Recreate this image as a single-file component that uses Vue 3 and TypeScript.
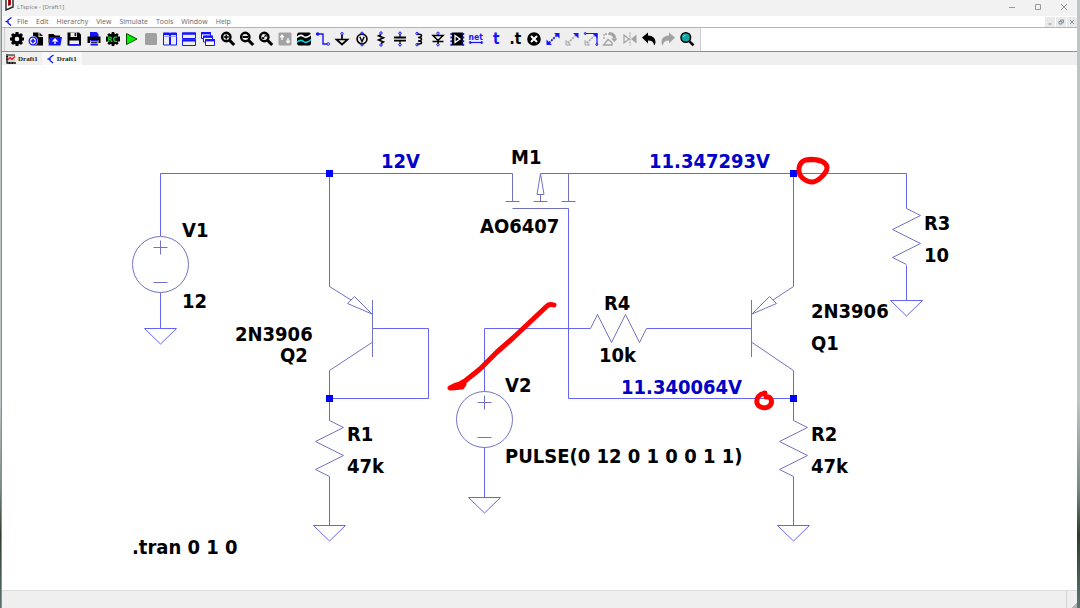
<script setup lang="ts">
interface Shape {
  d?: string
  text?: string
  x?: number
  y?: number
  size?: number
  fill?: string
  stroke?: string
  width?: number
  dash?: string
}
interface Tool {
  label: string
  shapes: Shape[]
}

const K = '#000'
const B = '#1414ff'
const G = '#a2a2a2'

const fill = (d: string, color = K): Shape => ({ d, fill: color })
const line = (d: string, color = K, width = 1.5, dash = 'none'): Shape => ({ d, stroke: color, width, dash })
const circle = (x: number, y: number, r: number) =>
  `M${x - r} ${y}a${r} ${r} 0 1 0 ${2 * r} 0a${r} ${r} 0 1 0 ${-2 * r} 0z`

const lens = [line(circle(6.3, 6, 4.2), K, 2.4), line('M9.6 9.4L14.2 14', K, 3)]

const tools: Tool[] = [
  {
    label: 'Settings',
    shapes: [
      line(circle(8, 8, 4), K, 3.4),
      line('M8 1v3M8 12v3M1 8h3M12 8h3M3 3l2 2M11 11l2 2M13 3l-2 2M5 11l-2 2', K, 3),
    ],
  },
  {
    label: 'New schematic',
    shapes: [
      fill('M5 1.500h5.500v4.500h4.500v8.500H5z'),
      fill('M11.500 1.500l3.500 3.500h-3.500z'),
      fill(circle(5, 10, 5), '#efefef'),
      line(circle(5, 10, 3.800), B, 1.3),
      line('M5 7.800v4.400M2.800 10h4.400', B, 1.6),
    ],
  },
  {
    label: 'Open',
    shapes: [
      fill('M1.500 3h5l1.500 1.500h5V7H3l-1.500 6z'),
      fill('M3 6h12l-1.500 8.500h-12z', B),
      line('M8 13V9M5.600 10.600L8 8l2.400 2.600', '#fff', 1.4),
    ],
  },
  {
    label: 'Save',
    shapes: [
      fill('M1.500 1.500h11.500l2 2v11H1.500z'),
      fill('M4.500 1.500h6.500v4.500H4.500z', '#efefef'),
      fill('M8.600 2h1.600v3.200H8.600z'),
      fill('M3.500 9.500h9.500v4H3.500z', '#efefef'),
      fill('M3 13h10.500v1.600H3z', B),
    ],
  },
  {
    label: 'Print',
    shapes: [
      fill('M4 1h6.500l2 2v3H4z', B),
      fill('M1.500 5.500h13v6.500h-13z'),
      fill('M4 9h8.500v5.500H4z', '#efefef'),
      line('M4.500 9.800h7.500M4.500 13.800h7.500', B, 1.5),
      line('M5 11.800h6.500', K, 1.2),
    ],
  },
  {
    label: 'Configure analysis',
    shapes: [
      line(circle(8, 8, 4), K, 3.4),
      line('M8 1v3M8 12v3M3.200 2.800l2 2M10.800 11.200l2 2M12.800 2.800l-2 2M5.200 11.200l-2 2', K, 2.6),
      fill('M1 5.500h14v5H1z'),
      { text: 'RC', x: 2.5, y: 10.600, size: 7.500, fill: '#00d820' },
    ],
  },
  { label: 'Run', shapes: [{ d: 'M2.500 2.500L13 8L2.500 13.500z', fill: '#00f000', stroke: '#064a06', width: 1 }] },
  { label: 'Stop', shapes: [fill('M3.500 2h9q1.500 0 1.500 1.500v9q0 1.500-1.500 1.500h-9q-1.500 0-1.500-1.500v-9q0-1.500 1.500-1.500z', '#a0a0a0')] },
  {
    label: 'Tile vertically',
    shapes: [line('M1.500 2h6v12h-6zM8.500 2h6v12h-6z', B, 1), line('M1 3h13.500', B, 2.2), line('M1.500 5.500h13', '#8d8dff', 0.8)],
  },
  {
    label: 'Tile horizontally',
    shapes: [line('M1.500 2h13v5.500h-13zM1.500 9h13v5.500h-13z', B, 1), line('M1 2.600h14M1 9.400h14', B, 2.2)],
  },
  {
    label: 'Cascade',
    shapes: [
      { d: 'M1.500 1.500h9v6h-9z', fill: '#fff', stroke: B, width: 1 },
      line('M1 2.300h10', B, 2.2),
      { d: 'M3.500 5h9v6h-9z', fill: '#fff', stroke: B, width: 1 },
      line('M3 5.800h10', B, 2.2),
      { d: 'M5.500 8.500h9v6h-9z', fill: '#fff', stroke: B, width: 1 },
      line('M5 9.300h10', B, 2.2),
    ],
  },
  { label: 'Zoom in', shapes: [...lens, line('M3.800 6h5M6.300 3.500v5', K, 1.6)] },
  { label: 'Zoom out', shapes: [...lens, line('M3.600 6h5.400', K, 2)] },
  { label: 'Zoom to fit', shapes: [...lens, line('M4.600 7.600L8 4.400', K, 1), fill('M6 3.800h2.500v2.500zM4.200 5.600v2.500h2.500z')] },
  {
    label: 'Autorange',
    shapes: [
      fill('M2.500 1.500h11l1 1v11l-1 1h-11l-1-1v-11z', G),
      line('M5 9V4.500M3.200 6.300L5 4.300l1.800 2M11 7v4.500M9.200 9.700l1.800 2l1.800-2', '#fff', 1.3),
    ],
  },
  {
    label: 'Waveforms',
    shapes: [
      fill('M2.500 1.500h11l1.500 1.500v10l-1.500 1.500h-11L1 13V3z'),
      line('M1 6.500q3.500-3.500 6.500-1t7.500-2', '#fff', 1.6),
      line('M1 11.500q3.500-3.500 6.500-1t7.500-2', '#00d6e0', 1.6),
    ],
  },
  { label: 'Wire', shapes: [line('M3 3h5v10h5', B, 1.4), fill(circle(2.700, 3, 1.8), B), { d: circle(13.200, 13, 1.300), fill: '#fff', stroke: B, width: 1 }] },
  { label: 'Ground', shapes: [line('M8 4v4M2.500 8.500h11L8 13.500z', K, 1.700), line(circle(8, 2.700, 1.200), B, 1)] },
  { label: 'Voltage source', shapes: [line(circle(8, 8, 4.900), K, 1.700), line('M5.800 5.800L8 10.500l2.200-4.700', K, 1.4), line(circle(8, 2.300, 1.200), B, 1), line(circle(8, 13.700, 1.200), B, 1)] },
  { label: 'Resistor', shapes: [line('M8 3.500l-2.500 1.300l5 2l-5 2.200l5 2L8 12.500', K, 1.5), line(circle(8, 2, 1.200), B, 1), line(circle(8, 14, 1.200), B, 1)] },
  { label: 'Capacitor', shapes: [line('M2 6.500h12M2 9.700h12', K, 1.8), line('M8 3v3M8 10v3', K, 1.2), line(circle(8, 2.200, 1.200), B, 1), line(circle(8, 13.800, 1.200), B, 1)] },
  { label: 'Inductor', shapes: [line('M6 3.200h2q2.500 0 2.500 1.600T7 6.500q3.500 0 3.500 1.700T7 9.900q3.500 0 3.500 1.500T8 12.900H6', K, 1.500), line(circle(6, 2.500, 1.200), B, 1), line(circle(6, 13.700, 1.200), B, 1)] },
  { label: 'Diode', shapes: [line('M3 4.500h10L8 9.500zM2.500 10.500h11M8 10v3', K, 1.500), line(circle(8, 2.300, 1.200), B, 1), line(circle(8, 13.700, 1.200), B, 1)] },
  {
    label: 'Component',
    shapes: [fill('M3 1.500h11v13H3z'), line('M6 4.500v7l5-3.500z', '#fff', 1.300), line('M2.300 2v13M14.300 2v13', B, 1.800, '2 1.600')],
  },
  { label: 'Net name', shapes: [{ text: 'net', x: 0.5, y: 8.500, size: 8.500, fill: B }, line('M2 11.500h12', B, 1.2), line(circle(2.300, 11.500, 1), B, 1), line(circle(13.700, 11.500, 1), B, 1)] },
  { label: 'Text', shapes: [{ text: 't', x: 5, y: 13, size: 15, fill: B }] },
  { label: 'SPICE directive', shapes: [{ text: '.t', x: 2.5, y: 13, size: 15, fill: K }] },
  { label: 'Delete', shapes: [fill(circle(8, 8, 6.800)), line('M5 5l6 6M11 5l-6 6', '#fff', 2)] },
  { label: 'Duplicate', shapes: [line('M4 12l8-8', B, 1.800, '2 1'), fill('M9 2h5.500v5.500zM1.500 8.500v5.500h5.500z', B)] },
  { label: 'Move', shapes: [line('M4 12l8-8', G, 1.600, '2 1'), fill('M9 2h5.500v5.500z', B), line('M2 9.500v4.500h4.500z', G, 1)] },
  { label: 'Drag', shapes: [line('M4 12l8-8', G, 1.600, '2 1'), fill('M9.500 2.500h5v5z', B), line('M2 9.500v4.500h4.500z', G, 1), line('M2.500 2.500h11.500v11', B, 1.2), line(circle(2.300, 2.500, 1), B, 1), line(circle(13.800, 13.500, 1), B, 1)] },
  {
    label: 'Rotate',
    shapes: [
      line('M2 8V3h5', G, 1.300, '2 1'),
      line('M7 2.500q5.500 0 5.500 5', G, 3),
      fill('M9 7.500h6.500L12.500 11z', G),
      line('M1.500 14h8.500v-2.500L6 8.500z', G, 1.300),
    ],
  },
  { label: 'Mirror', shapes: [line('M8 1.500v13', G, 1.100, '2 1'), line('M2 4v8l5-4z', G, 1.200), fill('M14.500 3.500v9L9 8z', G)] },
  { label: 'Undo', shapes: [fill('M1 6.500L7 1.500v3q7.500.5 7.500 6.500q0 2-1.500 3.500q0-5-6-5v3z')] },
  { label: 'Redo', shapes: [fill('M15 6.500L9 1.500v3Q1.500 5 1.500 11q0 2 1.500 3.500q0-5 6-5v3z', G)] },
  { label: 'Search', shapes: [{ d: circle(6.800, 6.500, 4.800), fill: '#12a3a3', stroke: K, width: 1.500 }, line('M10.500 10.300L14.500 14.300', K, 2.500), line('M4.500 6q.3-1.800 2-2', '#7fe0e0', 1)] },
]

const menus = ['File', 'Edit', 'Hierarchy', 'View', 'Simulate', 'Tools', 'Window', 'Help']

const wires = [
  'M160.500 236V173.500H512.500',
  'M329.500 173.500V286.500',
  'M372.500 328.500H428.500V398.500H329.500',
  'M329.500 370.500V420.500',
  'M329.500 476.500V525.500',
  'M160.500 292.500V328.500',
  'M540.500 173.500H906.500V208.500',
  'M906.500 265.500V300.500',
  'M568.500 208.500V398.500H793.500',
  'M793.500 173.500V286.500',
  'M793.500 370.500V420.500',
  'M793.500 476.500V525.500',
  'M484.500 391.500V328.500H590.500',
  'M646.500 328.500H751.500',
  'M484.500 447.500V497.500',
]

const grounds = [
  { x: 160.5, y: 328.5 },
  { x: 329.5, y: 525.5 },
  { x: 484.5, y: 497.5 },
  { x: 793.5, y: 525.5 },
  { x: 906.5, y: 300.5 },
]
const resistors = [
  { x: 329.5, y: 420.5 },
  { x: 793.5, y: 420.5 },
  { x: 906.5, y: 208.5 },
]
const sources = [
  { x: 160.5, y: 264.5 },
  { x: 484.5, y: 419.5 },
]
const transistors = [
  'M329.500 286.500L351 300M372 314L354.500 296.500L347.500 303.500zM372.500 300V357M372 342.500L329.500 370.500',
  'M793.500 286.500L773 300M752 314L769.500 296.500L776.500 303.500zM751.500 300V357M752 342.500L793.500 370.500',
]
const mosfet =
  'M512.500 173.500V201.500M505.500 201.500H519.500M533.500 201.500H547.500M561.500 201.500H575.500M540.500 201.500V194.500M540.500 173.500L537 194.500H544zM568.500 173.500V201.500M512.500 208.500H568.500'
const junctions = [
  { x: 326, y: 170 },
  { x: 790, y: 170 },
  { x: 326, y: 395 },
  { x: 790, y: 395 },
]

const labels = [
  { t: 'V1', x: 182, y: 237 },
  { t: '12', x: 182, y: 308 },
  { t: 'M1', x: 511, y: 164 },
  { t: 'AO6407', x: 480, y: 233 },
  { t: '2N3906', x: 235, y: 341 },
  { t: 'Q2', x: 280, y: 362 },
  { t: 'R1', x: 347, y: 441 },
  { t: '47k', x: 347, y: 473 },
  { t: 'R4', x: 604, y: 310 },
  { t: '10k', x: 599, y: 362 },
  { t: 'V2', x: 505, y: 392 },
  { t: 'PULSE(0 12 0 1 0 0 1 1)', x: 505, y: 463 },
  { t: 'R3', x: 924, y: 230 },
  { t: '10', x: 924, y: 262 },
  { t: '2N3906', x: 811, y: 318 },
  { t: 'Q1', x: 811, y: 350 },
  { t: 'R2', x: 811, y: 441 },
  { t: '47k', x: 811, y: 473 },
  { t: '.tran 0 1 0', x: 132, y: 554 },
]
const voltages = [
  { t: '12V', x: 381, y: 168 },
  { t: '11.347293V', x: 649, y: 168 },
  { t: '11.340064V', x: 621, y: 394 },
]
</script>

<template>
  <div class="desktop">
    <div class="window">
      <header class="titlebar">
        <svg class="app-icon" width="10" height="12" viewBox="0 0 10 12" aria-hidden="true">
          <path d="M1 0v10l7-3V0" fill="#fff" stroke="#222" stroke-width="1.400" />
          <path d="M3 0v6l3-1V0" fill="#b01020" />
          <path d="M4.500 0v5" stroke="#222" />
        </svg>
        <h1>LTspice - [Draft1]</h1>
        <div class="window-buttons">
          <button type="button" aria-label="Minimize">
            <svg width="8" height="8" viewBox="0 0 8 8"><path d="M1 4.500h6" /></svg>
          </button>
          <button type="button" aria-label="Maximize">
            <svg width="8" height="8" viewBox="0 0 8 8"><path d="M1.500 1.500h5v5h-5z" /></svg>
          </button>
          <button type="button" aria-label="Close">
            <svg width="8" height="8" viewBox="0 0 8 8"><path d="M1 1l6 6M7 1l-6 6" /></svg>
          </button>
        </div>
      </header>

      <nav class="menubar" aria-label="Main menu">
        <svg class="doc-icon" width="8" height="9" viewBox="0 0 8 9" aria-hidden="true">
          <path d="M6.500 .5L3 3v3l3 2.500M.5 4.500H3" fill="none" stroke="#1414ff" stroke-width="1.300" />
        </svg>
        <button v-for="m in menus" :key="m" type="button">{{ m }}</button>
        <div class="doc-buttons">
          <button type="button" aria-label="Minimize document">
            <svg width="8" height="8" viewBox="0 0 8 8"><path d="M2.500 6h3" /></svg>
          </button>
          <button type="button" aria-label="Restore document">
            <svg width="8" height="8" viewBox="0 0 8 8"><path d="M3.500 3.500V2h3v2.500H5M2 3.500h3V6H2z" /></svg>
          </button>
          <button type="button" aria-label="Close document">
            <svg width="8" height="8" viewBox="0 0 8 8"><path d="M2 2l4 4M6 2L2 6" /></svg>
          </button>
        </div>
      </nav>

      <div class="toolbar">
        <div class="tools" role="toolbar" aria-label="Schematic tools">
          <button v-for="tool in tools" :key="tool.label" type="button" :aria-label="tool.label">
            <svg width="16" height="16" viewBox="0 0 16 16">
              <template v-for="(s, i) in tool.shapes" :key="i">
                <text v-if="s.text" class="glyph" :x="s.x" :y="s.y" :font-size="s.size" :fill="s.fill">{{ s.text }}</text>
                <path
                  v-else
                  :d="s.d"
                  :fill="s.fill ?? 'none'"
                  :stroke="s.stroke ?? 'none'"
                  :stroke-width="s.width"
                  :stroke-dasharray="s.dash"
                />
              </template>
            </svg>
          </button>
        </div>
      </div>

      <div class="tabs" role="tablist">
        <button type="button" role="tab" aria-selected="false">
          <svg width="10" height="10" viewBox="0 0 10 10" aria-hidden="true">
            <path d="M1 1h8v7H1z" fill="#d8d0d0" />
            <path d="M1 0v9h9" fill="none" stroke="#111" stroke-width="1.300" />
            <path d="M0 2.500h2M0 5h2M3.500 8v2M6.500 8v2M2 1h7" stroke="#111" />
            <path d="M2 5.500l2-2l2 2l3-3" fill="none" stroke="#f01818" stroke-width="1.200" />
          </svg>
          Draft1
        </button>
        <button type="button" role="tab" aria-selected="true" class="active">
          <svg width="8" height="10" viewBox="0 0 8 10" aria-hidden="true">
            <path d="M6.500 1L3 3.500v3L6 9M.5 5H3" fill="none" stroke="#1414ff" stroke-width="1.300" />
          </svg>
          Draft1
        </button>
      </div>

      <main class="canvas">
        <svg viewBox="2 65 1075 525" preserveAspectRatio="xMinYMin meet" role="img" aria-label="Schematic Draft1">
          <g class="wire">
            <path v-for="w in wires" :key="w" :d="w" />
            <path v-for="g in grounds" :key="`${g.x}-${g.y}`" :d="`M${g.x - 16} ${g.y}h32l-16 15.500z`" />
          </g>
          <g class="part">
            <path
              v-for="r in resistors"
              :key="r.x"
              :d="`M${r.x} ${r.y}l14 7l-28 14l28 14l-28 14l14 7`"
            />
            <path d="M590.500 328.500l7-14l14 28l14-28l14 28l7-14" />
            <path v-for="q in transistors" :key="q" :d="q" />
            <path :d="mosfet" />
            <g v-for="s in sources" :key="s.x">
              <circle :cx="s.x" :cy="s.y" r="28" />
              <path :d="`M${s.x - 7} ${s.y - 17}h14M${s.x} ${s.y - 24}v14M${s.x - 7} ${s.y + 18}h14`" />
            </g>
          </g>
          <rect v-for="j in junctions" :key="`${j.x}-${j.y}`" class="junction" :x="j.x" :y="j.y" width="7" height="7" />
          <text v-for="l in labels" :key="`${l.x}-${l.y}`" class="label" :x="l.x" :y="l.y">{{ l.t }}</text>
          <text v-for="v in voltages" :key="v.t" class="label voltage" :x="v.x" :y="v.y">{{ v.t }}</text>
          <g class="marker">
            <path d="M820 161C812 158 804 159 801 163C799 166 798 170 800 175C803 180 809 182 813 182C818 181 822 177 825 173C828 169 828 165 823 162C819 159 813 159 807 160" />
            <path d="M765 393C759 394 756 398 757 403C758 407 764 409 768 407C773 404 772 399 769 397L766 397" />
            <path d="M554 305C551 304 549 304 547 306L530 322L513 338L497 352L480 369L465 381L458 385" />
            <path d="M450 388L456 385L464 384L462 387L451 388" />
          </g>
        </svg>
      </main>

      <footer class="statusbar"><span class="grip" /></footer>
    </div>
  </div>
</template>

<style>
html,
body {
  margin: 0;
}
</style>

<style scoped>
.desktop {
  box-sizing: border-box;
  min-height: 100vh;
  display: flex;
  padding: 0 3px 0 1px;
  background: linear-gradient(#bfc4c7 0 66%, #7b8b86 80%, #2d3c2c 88%, #5d7372);
}
.window {
  flex: 1;
  min-width: 0;
  display: flex;
  flex-direction: column;
  box-sizing: border-box;
  border-left: 1px solid #8c8c8c;
  background: #fff;
}
button {
  padding: 0;
  border: 0;
  background: none;
  font: inherit;
  color: inherit;
}
svg {
  display: block;
}
.titlebar {
  height: 16px;
  display: flex;
  align-items: flex-start;
  gap: 2px;
  padding-left: 3px;
  background: #f2f2f2;
  font-family: "Noto Sans", "Open Sans", sans-serif;
  color: #848484;
}
h1 {
  flex: 1;
  margin: 0;
  font-size: 6px;
  line-height: 14px;
  font-weight: 400;
}
.window-buttons {
  display: flex;
  gap: 18px;
  padding: 3px 9px 0 0;
}
.window-buttons path {
  fill: none;
  stroke: #999;
}
.menubar {
  height: 11px;
  display: flex;
  align-items: center;
  gap: 8px;
  padding-left: 3px;
  border-bottom: 1px solid #b4b4b4;
  background: #fff;
  font: 7px/10px "Open Sans", "Noto Sans", sans-serif;
  color: #666;
}
.doc-icon {
  margin-right: -4px;
}
.doc-buttons {
  display: flex;
  gap: 1px;
  margin-left: auto;
}
.doc-buttons button {
  display: grid;
  place-items: center;
  width: 10px;
  height: 10px;
  background: #e9e9e9;
}
.doc-buttons path {
  fill: none;
  stroke: #7d92a5;
}
.toolbar {
  display: flex;
  border-bottom: 1px solid #8e8e8e;
  background: #fff;
}
.tools {
  box-sizing: border-box;
  width: 699px;
  height: 23px;
  display: flex;
  justify-content: space-between;
  align-items: center;
  padding: 0 5px 1px 7px;
  border-right: 1px solid #cfcfcf;
  background: linear-gradient(90deg, transparent 0 2px, #cdcdcd 2px 3px, transparent 3px), #efefef;
}
.glyph {
  font-family: "DejaVu Sans Condensed", "DejaVu Sans", sans-serif;
  font-weight: 700;
}
.tabs {
  height: 13px;
  display: flex;
  background: #efefef;
  font: 700 7px/12px "Liberation Serif", serif;
  color: #222;
}
.tabs button {
  display: flex;
  align-items: center;
  gap: 2px;
  padding: 0 4px;
}
.tabs .active {
  padding: 0 5px;
  background: #f8f8f8;
}
.canvas {
  flex: 1;
  background: #fff;
}
.canvas svg {
  width: 100%;
  height: auto;
}
.wire {
  fill: none;
  stroke: #6464f5;
}
.part {
  fill: none;
  stroke: #7272c4;
}
.junction {
  fill: #0000ff;
}
.label {
  font: 700 20px "DejaVu Sans Condensed", "DejaVu Sans", sans-serif;
  fill: #000;
}
.voltage {
  fill: #0000c8;
}
.marker {
  fill: none;
  stroke: #ff0000;
  stroke-width: 5px;
  stroke-linecap: round;
  stroke-linejoin: round;
}
.statusbar {
  box-sizing: border-box;
  height: 18px;
  display: flex;
  justify-content: flex-end;
  border-top: 1px solid #dcdcdc;
  background: #efefef;
}
.grip {
  width: 10px;
  border-left: 1px solid #d4d4d4;
  background: linear-gradient(135deg, transparent 0 80%, #b5b5b5 80%);
}
</style>
